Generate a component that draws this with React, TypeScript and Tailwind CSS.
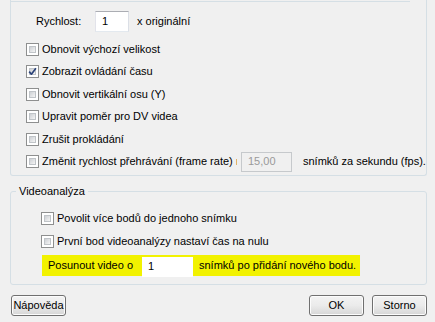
import React from "react";

const font = { fontFamily: '"Liberation Sans", Arial, sans-serif' };

function Check({ checked = false }: { checked?: boolean }) {
  return (
    <span className="relative flex h-[13px] w-[13px] shrink-0 border border-[#8e8f8f] bg-white p-[2px]">
      <span className="flex-1 border border-[#c0c4c8] bg-gradient-to-br from-[#cdd0d4] to-[#f5f5f5]" />
      {checked && (
        <svg className="absolute left-0 top-0" width="11" height="11" viewBox="0 0 11 11">
          <path d="M2.2 5.6 L4.4 8.2 L8.9 2.2" fill="none" stroke="#2b4279" strokeWidth="1.7" strokeLinejoin="round" />
        </svg>
      )}
    </span>
  );
}

function Row({ checked, label }: { checked?: boolean; label: string }) {
  return (
    <div className="flex h-[22.5px] items-center gap-[3px]">
      <Check checked={checked} />
      <span>{label}</span>
    </div>
  );
}

function Btn({ children }: { children: React.ReactNode }) {
  return (
    <button className="flex h-[21px] w-[55px] items-center justify-center rounded-[3px] border border-[#707070] bg-gradient-to-b from-[#f3f3f3] via-[#ebebeb] to-[#d6d6d6] text-black shadow-[inset_0_0_0_1px_#fcfcfc]">
      {children}
    </button>
  );
}

export default function App() {
  return (
    <div className="relative h-[322px] w-[435px] overflow-hidden bg-[#f0f0f0] text-[11px] leading-[13px] text-black" style={font}>
      {/* top group box */}
      <div className="ml-[10px] h-[176px] w-[417px] rounded-b-[3px] border border-t-0 border-[#d5dfe5]">
        <div className="h-[2px] w-[399px] border-b border-[#d5dfe5]" />
        <div className="mt-[9px] flex h-[21px] items-center pl-[25px]">
          <span className="w-[59px]">Rychlost:</span>
          <div className="flex h-[21px] w-[34px] items-center border border-[#abadb3] border-l-[#e2e3ea] border-r-[#dbdfe6] border-b-[#e3e9ef] bg-white pl-[6px]">1</div>
          <span className="ml-[8px]">x originální</span>
        </div>
        <div className="mt-[5.75px] pl-[15px]">
          <Row label="Obnovit výchozí velikost" />
          <Row checked label="Zobrazit ovládání času" />
          <Row label="Obnovit vertikální osu (Y)" />
          <Row label="Upravit poměr pro DV videa" />
          <Row label="Zrušit prokládání" />
          <div className="flex h-[22.5px] items-center gap-[3px]">
            <Check />
            <span className="w-[195px] overflow-hidden whitespace-nowrap">Změnit rychlost přehrávání (frame rate) ı</span>
            <div className="ml-[1px] flex h-[20px] w-[51px] items-center border border-[#c6c9cc] bg-[#f0f0f0] pl-[6px] text-[#9a9a9a]">15,00</div>
            <span className="ml-[8px]">snímků za sekundu (fps).</span>
          </div>
        </div>
      </div>

      {/* Videoanalýza group box */}
      <fieldset className="ml-[10px] mt-[8px] h-[101px] w-[417px] rounded-[3px] border border-[#d5dfe5] p-0">
        <legend className="ml-[5px] px-[3px] leading-[14px]">Videoanalýza</legend>
        <div className="mt-[9px] pl-[30px]">
          <div className="flex h-[23px] items-center gap-[3px]">
            <Check />
            <span>Povolit více bodů do jednoho snímku</span>
          </div>
          <div className="flex h-[23px] items-center gap-[3px]">
            <Check />
            <span>První bod videoanalýzy nastaví čas na nulu</span>
          </div>
        </div>
        <div className="ml-[31px] mt-[2px] flex h-[21px] w-[318px] items-center bg-[#f2f200] pl-[6px]">
          <span className="w-[94px]">Posunout video o</span>
          <div className="mt-[2px] flex h-[20px] w-[51px] items-center bg-white pl-[6px]">1</div>
          <span className="ml-[6px]">snímků po přidání nového bodu.</span>
        </div>
      </fieldset>

      {/* buttons */}
      <div className="ml-[11px] mr-[8px] mt-[10px] flex items-center">
        <Btn>Nápověda</Btn>
        <div className="flex-1" />
        <Btn>OK</Btn>
        <div className="w-[8px]" />
        <Btn>Storno</Btn>
      </div>
    </div>
  );
}
